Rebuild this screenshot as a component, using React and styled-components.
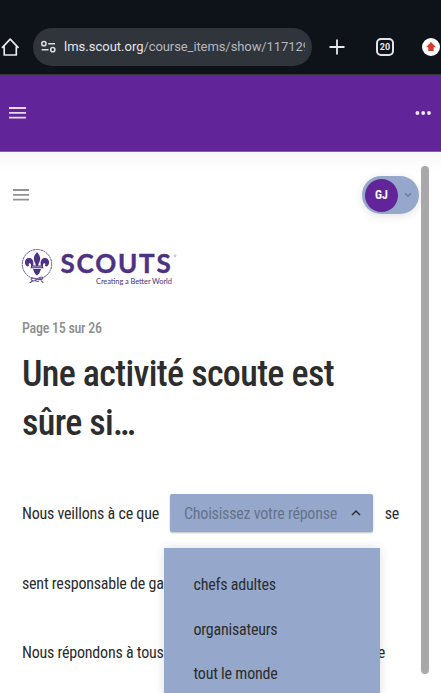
import * as React from 'react';
import styled, { createGlobalStyle } from 'styled-components';

const GlobalStyle = createGlobalStyle`
  * {
    box-sizing: border-box;
  }

  body {
    margin: 0;
    background: #fff;
    font-family: 'Roboto Condensed', Roboto, sans-serif;
    font-stretch: 75%;
    color: #2d2d2d;
  }

  svg {
    display: block;
    flex: none;
  }
`;

const Screen = styled.div`
  display: flex;
  flex-direction: column;
  width: 441px;
  height: 693px;
  overflow: hidden;
`;

const BrowserBar = styled.div`
  display: flex;
  align-items: center;
  flex: none;
  height: 75px;
  padding-top: 20px;
  background: #0e131a;
  border-bottom: 1px solid #34373d;
  font-stretch: 100%;
`;

const AddressBar = styled.div`
  display: flex;
  align-items: center;
  width: 279px;
  height: 38px;
  margin: 0 17px 0 13px;
  padding: 0 7px 0 8px;
  border-radius: 19px;
  background: #30343b;
`;

const Url = styled.div`
  flex: 1;
  margin-left: 8px;
  overflow: hidden;
  white-space: nowrap;
  font-family: Roboto, sans-serif;
  font-size: 13px;
  line-height: 18px;
  letter-spacing: -0.09px;
  color: #b4b7bd;

  b {
    font-weight: 400;
    letter-spacing: 0;
    color: #e4e5e9;
  }
`;

const TabCount = styled.div`
  width: 18px;
  height: 18px;
  margin: 0 28px 0 31px;
  border: 2px solid #e2e3e6;
  border-radius: 5px;
  font: 700 9px/14px Roboto, sans-serif;
  text-align: center;
  color: #e8e9ec;
`;

const NavBar = styled.div`
  display: flex;
  align-items: center;
  justify-content: space-between;
  flex: none;
  height: 77px;
  padding: 0 9px;
  background: #622599;
  border-bottom: 1px solid #8a5bb3;
`;

const Page = styled.div`
  display: flex;
  flex: 1;
  min-height: 0;
  background: linear-gradient(#f8f8f8, #fff 20px);
`;

const Content = styled.div`
  width: 421px;
  flex: none;
`;

const ScrollThumb = styled.div`
  width: 8px;
  height: 508px;
  margin-top: 14px;
  border-radius: 4px;
  background: #a9a9a9;
`;

const Toolbar = styled.div`
  display: flex;
  align-items: center;
  justify-content: space-between;
  height: 38px;
  margin-top: 24px;
  padding: 0 2px 0 13px;
`;

const Account = styled.div`
  display: flex;
  align-items: center;
  width: 57px;
  height: 38px;
  padding-left: 3px;
  border-radius: 19px;
  background: #95a8cc;
  box-shadow: 0 2px 8px rgba(0, 0, 0, 0.12);
`;

const Avatar = styled.div`
  width: 33px;
  height: 33px;
  margin-right: 6px;
  border-radius: 50%;
  background: #622599;
  font-size: 12px;
  font-weight: 700;
  line-height: 33px;
  text-align: center;
  color: #fff;
`;

const Logo = styled.div`
  display: flex;
  height: 40px;
  margin: 34px 0 0 21px;
`;

const Pagination = styled.div`
  margin: 30px 0 0 22px;
  font-size: 14px;
  font-weight: 500;
  line-height: 20px;
  letter-spacing: -0.26px;
  color: #8e8e8e;
`;

const Title = styled.h1`
  margin: 12px 0 0 22px;
  font-size: 36px;
  font-weight: 550;
  line-height: 49px;
  letter-spacing: -0.63px;
`;

const Line = styled.div`
  display: flex;
  align-items: center;
  height: 38px;
  margin-top: ${(props) => props.$gap}px;
  padding-left: 22px;
  font-size: 16px;
  letter-spacing: -0.22px;
  white-space: nowrap;
`;

const LineEnd = styled.span`
  margin-left: auto;
  padding-right: ${(props) => props.$right}px;
`;

const SelectBox = styled.div`
  position: relative;
  display: flex;
  align-items: center;
  justify-content: space-between;
  width: 203px;
  height: 38px;
  margin-left: 11px;
  padding: 0 12px 0 14px;
  border-radius: 2px;
  background: #95a8cc;
  box-shadow: 0 1px 2px rgba(0, 0, 0, 0.25);
  color: #66728a;
`;

const Menu = styled.div`
  position: absolute;
  top: 54px;
  left: -6px;
  z-index: 1;
  width: 216px;
  height: 170px;
  padding: 14px 29.5px;
  background: #95a8cc;
  box-shadow: 0 0 10px rgba(0, 0, 0, 0.13);
  color: #2d2d2d;
`;

const Option = styled.div`
  height: 44.5px;
  line-height: 45px;
`;

const HomeIcon = () => (
  <svg width="20" height="20" viewBox="0 0 20 20" fill="none" stroke="#e8e9ec" strokeWidth="1.7" strokeLinejoin="round">
    <path d="M4.2 9.5V18H16.3V9.5M2 10.8L10.2 2.2L18.5 10.8" />
  </svg>
);

const TuneIcon = () => (
  <svg width="15" height="14" viewBox="0 0 15 14" fill="none" stroke="#dcdde1" strokeWidth="1.5">
    <circle cx="2.9" cy="3.7" r="2.1" />
    <circle cx="11.8" cy="9.7" r="2.1" />
    <path d="M7.2 3.7H14M.7 9.7H7.6" />
  </svg>
);

const Bars = ({ width, color }) => (
  <svg width={width} height="14" fill="none" stroke={color} strokeWidth="1.8">
    <path d={`M0 2H${width}M0 6.8H${width}M0 11.6H${width}`} />
  </svg>
);

const ScoutsLogo = () => (
  <svg width="160" height="40" viewBox="0 0 160 40" fill="#4d3182">
    <circle cx="16" cy="16.2" r="14.7" fill="none" stroke="#65508f" strokeWidth="1" strokeDasharray="2.2 .5" />
    <path d="M16 4C13.8 6.5 12.4 9 13 12C13.3 14 14.6 15.5 14.8 17.5H12.2C12.8 14.5 12.2 10.5 8.6 10.1C4.5 9.7 2.8 13.9 4.7 17.1C5.4 18.6 7.2 18.9 8 17.7C7.1 16.3 8.1 14.9 9.3 15.5C10.5 16.2 10.3 18.5 9.5 20.2H22.5C21.7 18.5 21.5 16.2 22.7 15.5C23.9 14.9 24.9 16.3 24 17.7C24.8 18.9 26.6 18.6 27.3 17.1C29.2 13.9 27.5 9.7 23.4 10.1C19.8 10.5 19.2 14.5 19.8 17.5H17.2C17.4 15.5 18.7 14 19 12C19.6 9 18.2 6.5 16 4ZM12 21H20L18.9 23.9C18.5 25.7 17 26 16 27.8C15 26 13.5 25.7 13.1 23.9Z" />
    <path d="M11 18.9H21" stroke="#c9bfdc" strokeWidth=".8" />
    <path d="M10 31C12 27 18 34.5 21.8 30.5C22.5 28.5 19 28.2 16 31.2C13 34 10.5 33 10 31M12 32.5L8.7 35M20 32.5L22.3 35M14.5 33.2H18" fill="none" stroke="#65508f" strokeWidth="1.1" />
    <text x="39.5" y="25" textLength="112" lengthAdjust="spacingAndGlyphs" letterSpacing="1.8" fontFamily="Lato" fontSize="26" fontWeight="700" stroke="#4d3182" strokeWidth=".4" style={{ fontStretch: '100%' }}>SCOUTS</text>
    <text x="75" y="36.3" textLength="76" fontFamily="Lato" fontSize="7.5">Creating a Better World</text>
    <circle cx="154" cy="7.8" r="1" fill="none" stroke="#8f80ad" strokeWidth=".5" />
  </svg>
);

const App = () => (
  <>
    <GlobalStyle />
    <Screen>
      <BrowserBar>
        <HomeIcon />
        <AddressBar>
          <TuneIcon />
          <Url>
            <b>lms.scout.org</b>/course_items/show/117129
          </Url>
        </AddressBar>
        <svg width="16" height="16" stroke="#e8e9ec" strokeWidth="1.8">
          <path d="M8 .5V15.5M.5 8H15.5" />
        </svg>
        <TabCount>20</TabCount>
        <svg width="18" height="18">
          <circle cx="9" cy="9" r="9" fill="#fff" />
          <path d="M9 4L14 9.2H11.7V13H6.3V9.2H4Z" fill="#d93a2b" />
        </svg>
      </BrowserBar>
      <NavBar>
        <Bars width={17} color="#e6dbee" />
        <svg width="17" height="6" fill="#f1e9f6">
          <circle cx="2.4" cy="3" r="1.9" />
          <circle cx="8.2" cy="3" r="1.9" />
          <circle cx="14" cy="3" r="1.9" />
        </svg>
      </NavBar>
      <Page>
        <Content>
          <Toolbar>
            <Bars width={16} color="#929292" />
            <Account>
              <Avatar>GJ</Avatar>
              <svg width="8" height="6" fill="none" stroke="#75839f" strokeWidth="1.7">
                <path d="M1 1.2L4 4.2L7 1.2" />
              </svg>
            </Account>
          </Toolbar>
          <Logo>
            <ScoutsLogo />
          </Logo>
          <Pagination>Page 15 sur 26</Pagination>
          <Title>
            Une activité scoute est
            <br />
            sûre si…
          </Title>
          <Line $gap={46}>
            <span>Nous veillons à ce que</span>
            <SelectBox>
              Choisissez votre réponse
              <svg width="10" height="8" fill="none" stroke="#2d2d2d" strokeWidth="1.5">
                <path d="M1 6L5 2L9 6" />
              </svg>
              <Menu>
                <Option>chefs adultes</Option>
                <Option>organisateurs</Option>
                <Option>tout le monde</Option>
              </Menu>
            </SelectBox>
            <LineEnd $right={22}>se</LineEnd>
          </Line>
          <Line $gap={32}>
            <span>sent responsable de ga</span>
          </Line>
          <Line $gap={31}>
            <span>Nous répondons à tous</span>
            <LineEnd $right={36}>e</LineEnd>
          </Line>
        </Content>
        <ScrollThumb />
      </Page>
    </Screen>
  </>
);

export default App;
